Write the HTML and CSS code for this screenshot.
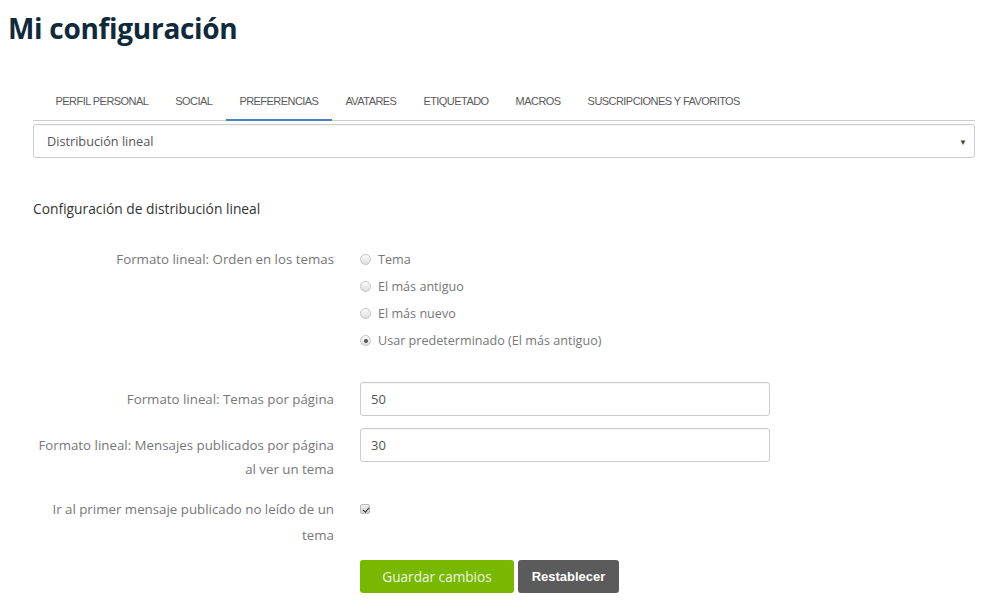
FILE: index.html
```html
<!DOCTYPE html>
<html lang="es">
<head>
<meta charset="utf-8">
<title>Mi configuración</title>
<link rel="stylesheet" href="styles.css">
</head>
<body>
<h1 class="title">Mi configuración</h1>
<div class="content">
  <nav class="tabs">
    <ul class="tab-list">
      <li class="tab">Perfil personal</li>
      <li class="tab">Social</li>
      <li class="tab active">Preferencias</li>
      <li class="tab">Avatares</li>
      <li class="tab">Etiquetado</li>
      <li class="tab">Macros</li>
      <li class="tab">Suscripciones y favoritos</li>
    </ul>
  </nav>
  <div class="select">
    <span>Distribución lineal</span>
    <span class="arrow">▼</span>
  </div>
  <h2 class="section-title">Configuración de distribución lineal</h2>
  <form class="form">
    <div class="row row-radios">
      <div class="label label-radio">Formato lineal: Orden en los temas</div>
      <div class="control">
        <label class="radio-item"><input type="radio" name="order" class="radio"> Tema</label>
        <label class="radio-item"><input type="radio" name="order" class="radio"> El más antiguo</label>
        <label class="radio-item"><input type="radio" name="order" class="radio"> El más nuevo</label>
        <label class="radio-item"><input type="radio" name="order" class="radio" checked> Usar predeterminado (El más antiguo)</label>
      </div>
    </div>
    <div class="row row-input1">
      <div class="label">Formato lineal: Temas por página</div>
      <div class="control"><input class="text-input" type="text" value="50"></div>
    </div>
    <div class="row row-input2">
      <div class="label">Formato lineal: Mensajes publicados por página al ver un tema</div>
      <div class="control"><input class="text-input" type="text" value="30"></div>
    </div>
    <div class="row row-check">
      <div class="label label-check">Ir al primer mensaje publicado no leído de un tema</div>
      <div class="control control-check"><input type="checkbox" class="checkbox" checked></div>
    </div>
    <div class="row row-buttons">
      <div class="label"></div>
      <div class="control buttons">
        <button type="button" class="btn btn-save">Guardar cambios</button>
        <button type="button" class="btn btn-reset">Restablecer</button>
      </div>
    </div>
  </form>
</div>
</body>
</html>
```
FILE: styles.css
```css
* { box-sizing: border-box; }
html, body { margin: 0; padding: 0; background: #fff; }
body {
  font-family: "Open Sans", "Lato", sans-serif;
  font-size: 13px;
  color: #777;
}
.title {
  margin: 10px 0 0 8px;
  font-family: "Open Sans", sans-serif;
  font-weight: 700;
  font-size: 28px;
  line-height: 36px;
  letter-spacing: -0.3px;
  color: #0f2a3b;
}
.content {
  margin: 0 23px 0 33px;
}
.tabs {
  margin-top: 38px;
  border-bottom: 1px solid #ccc;
}
.tab-list {
  list-style: none;
  margin: 0 0 -1px 0;
  padding: 0 0 0 9px;
  display: flex;
}
.tab {
  padding: 0 13.5px;
  line-height: 35px;
  border-bottom: 2px solid transparent;
  font-family: "Liberation Sans", Arial, sans-serif;
  font-size: 11px;
  letter-spacing: -0.55px;
  text-transform: uppercase;
  color: #5a5a5a;
}
.tab.active { border-bottom-color: #4d80c2; }
.select {
  margin-top: 3px;
  height: 34px;
  border: 1px solid #ccc;
  border-radius: 3px;
  display: flex;
  align-items: center;
  justify-content: space-between;
  padding: 0 7px 0 13px;
  color: #555;
  font-size: 12.7px;
  box-shadow: inset 0 1px 1px rgba(0,0,0,0.04);
}
.arrow { font-size: 8px; color: #444; }
.section-title {
  margin: 42px 0 0 0;
  font-size: 13.8px;
  font-weight: 400;
  line-height: 18px;
  color: #333;
}
.form { margin: 0; }
.row {
  display: flex;
  align-items: flex-start;
}
.label {
  width: 301px;
  flex: none;
  text-align: right;
  font-size: 13.3px;
  line-height: 24px;
  padding-top: 5px;
  color: #777;
}
.control {
  margin-left: 26px;
  width: 410px;
}
.row-radios { margin-top: 28px; }
.label-radio { padding-top: 0; line-height: 27px; }
.radio-item {
  display: flex;
  align-items: center;
  height: 27px;
  font-size: 12.6px;
  color: #777;
}
.radio {
  appearance: none;
  -webkit-appearance: none;
  margin: 0 7px 0 0;
  width: 11px;
  height: 11px;
  border-radius: 50%;
  border: 1px solid #c4c4c4;
  background: linear-gradient(#fbfbfb, #dedede);
  position: relative;
  flex: none;
}
.radio:checked::after {
  content: "";
  position: absolute;
  left: 2.5px;
  top: 2.5px;
  width: 4px;
  height: 4px;
  border-radius: 50%;
  background: #555;
}
.row-input1 { margin-top: 28px; }
.row-input2 { margin-top: 12px; }
.text-input {
  display: block;
  width: 410px;
  height: 34px;
  border: 1px solid #ccc;
  border-radius: 3px;
  padding: 0 10px;
  font-family: "Open Sans", sans-serif;
  font-size: 13px;
  color: #555;
  box-shadow: inset 0 1px 1px rgba(0,0,0,0.04);
  outline: none;
}
.row-check { margin-top: 15px; }
.label-check { padding-top: 0; line-height: 26px; }
.control-check {
  height: 26px;
  display: flex;
  align-items: center;
}
.checkbox {
  appearance: none;
  -webkit-appearance: none;
  margin: 0 0 0 0;
  width: 10px;
  height: 10px;
  border-radius: 2px;
  border: 1px solid #b8b8b8;
  background: linear-gradient(#eee, #d4d4d4);
  position: relative;
}
.checkbox:checked::after {
  content: "";
  position: absolute;
  left: 2.5px;
  top: 0.5px;
  width: 2.5px;
  height: 5px;
  border: solid #333;
  border-width: 0 1.5px 1.5px 0;
  transform: rotate(40deg);
}
.row-buttons { margin-top: 12px; }
.buttons { display: flex; gap: 4px; }
.btn {
  height: 33px;
  border: none;
  border-radius: 3px;
  font-size: 14px;
  cursor: pointer;
}
.btn-save {
  background: #78b800;
  color: #eef6e0;
  font-family: "Open Sans", sans-serif;
  font-size: 13.6px;
  padding: 0;
  width: 154px;
}
.btn-reset {
  background: #5b5b5b;
  color: #fff;
  font-family: "Liberation Sans", Arial, sans-serif;
  font-weight: 700;
  font-size: 13px;
  padding: 0;
  width: 101px;
}
```
